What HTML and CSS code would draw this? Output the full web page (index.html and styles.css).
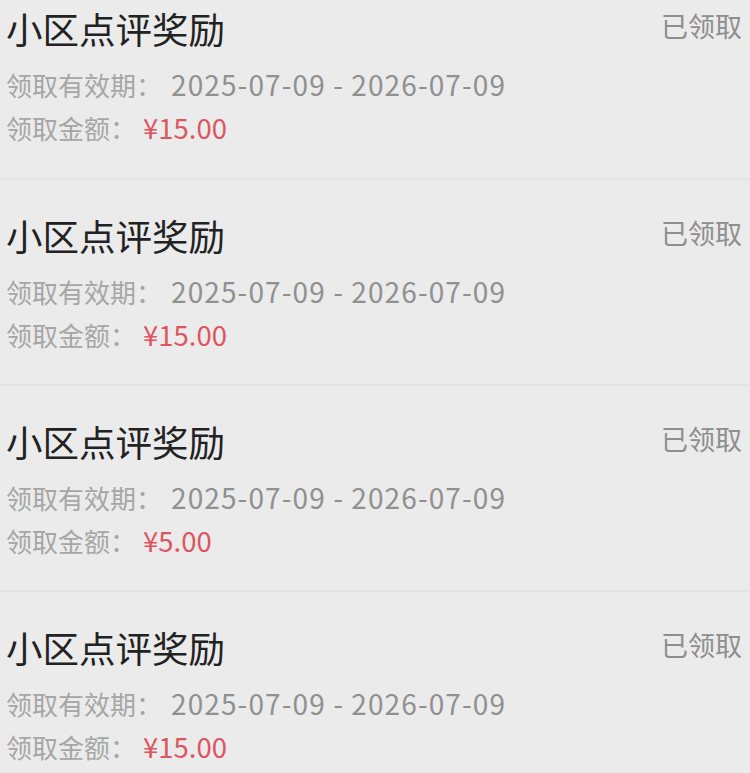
FILE: index.html
```html
<!DOCTYPE html>
<html lang="zh-CN">
<head>
<meta charset="utf-8">
<title>小区点评奖励</title>
<link rel="stylesheet" href="styles.css">
</head>
<body>
<div class="list">
  <div class="card">
    <div class="head"><div class="title">小区点评奖励</div><div class="status">已领取</div></div>
    <div class="row first">领取有效期：<span class="val">2025-07-09 - 2026-07-09</span></div>
    <div class="row">领取金额：<span class="amt">¥15.00</span></div>
  </div>
  <div class="card">
    <div class="head"><div class="title">小区点评奖励</div><div class="status">已领取</div></div>
    <div class="row first">领取有效期：<span class="val">2025-07-09 - 2026-07-09</span></div>
    <div class="row">领取金额：<span class="amt">¥15.00</span></div>
  </div>
  <div class="card">
    <div class="head"><div class="title">小区点评奖励</div><div class="status">已领取</div></div>
    <div class="row first">领取有效期：<span class="val">2025-07-09 - 2026-07-09</span></div>
    <div class="row">领取金额：<span class="amt">¥5.00</span></div>
  </div>
  <div class="card">
    <div class="head"><div class="title">小区点评奖励</div><div class="status">已领取</div></div>
    <div class="row first">领取有效期：<span class="val">2025-07-09 - 2026-07-09</span></div>
    <div class="row">领取金额：<span class="amt">¥15.00</span></div>
  </div>
</div>
</body>
</html>
```
FILE: styles.css
```css
html, body {
  margin: 0;
  padding: 0;
  background: #ebebeb;
}
body {
  font-family: "Noto Sans CJK SC", "Noto Sans", sans-serif;
  width: 750px;
  height: 773px;
  overflow: hidden;
}
.list {
  display: flex;
  flex-direction: column;
}
.card {
  padding: 34px 8px 28px 6px;
  border-bottom: 2px solid #e3e3e3;
}
.card:first-child {
  padding-top: 7px;
  padding-bottom: 29px;
}
.head {
  display: flex;
  justify-content: space-between;
  align-items: flex-start;
}
.title {
  font-size: 36.5px;
  line-height: 44px;
  color: #222222;
}
.status {
  font-size: 27px;
  line-height: 36px;
  color: #8e8e8e;
  margin-top: 1px;
}
.row {
  font-size: 26px;
  line-height: 43px;
  height: 43px;
  color: #a6a6a6;
  white-space: nowrap;
}
.row.first {
  margin-top: 12px;
}
.val {
  color: #909090;
  font-size: 28px;
  letter-spacing: 1.1px;
  margin-left: 9px;
}
.amt {
  color: #de5560;
  font-size: 27.5px;
  margin-left: 7px;
}
```
